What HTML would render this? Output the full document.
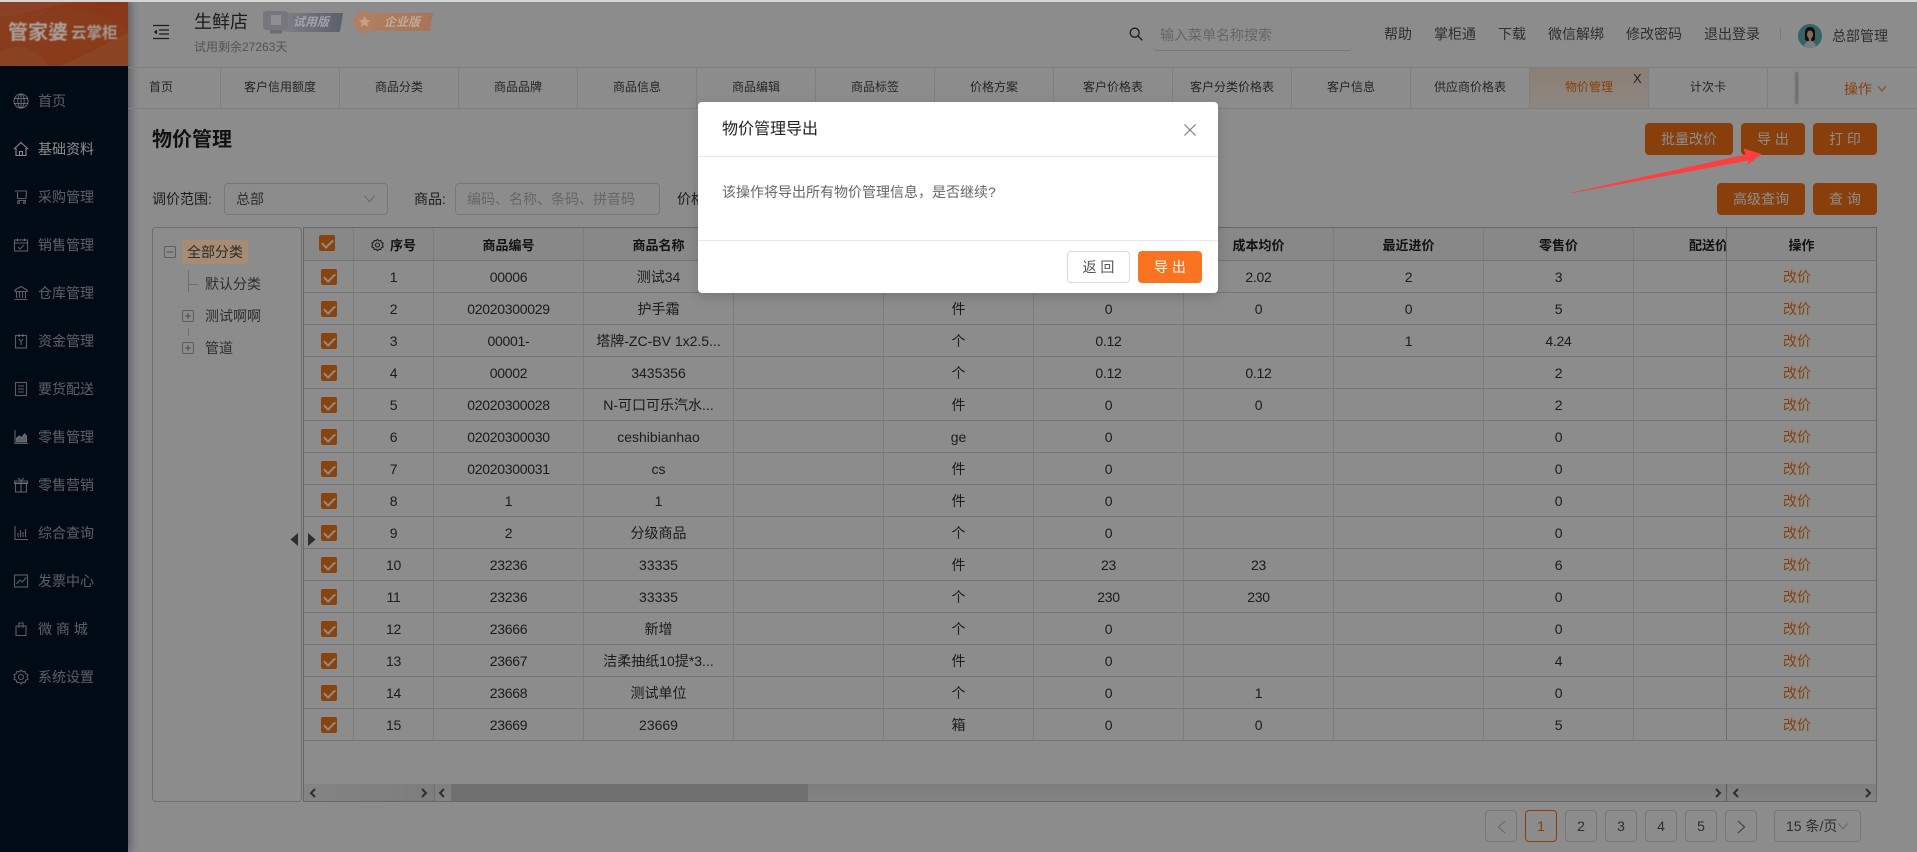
<!DOCTYPE html>
<html lang="zh"><head><meta charset="utf-8"><title>物价管理</title>
<style>
*{box-sizing:border-box}
html,body{margin:0;padding:0;width:1917px;height:852px;overflow:hidden;background:#fff;font-family:"Liberation Sans","Noto Sans CJK SC",sans-serif;color:#333;font-size:14px}
.t{position:absolute;white-space:nowrap;line-height:20px}
.side{position:absolute;left:0;top:0;width:128px;height:852px;background:#001529;box-shadow:3px 0 8px rgba(0,21,41,.35)}
.mi{position:absolute;left:38px;color:rgba(255,255,255,.65);line-height:20px;white-space:nowrap}
.side svg{position:absolute;left:13px;width:16px;height:16px;fill:none;stroke:rgba(255,255,255,.65);stroke-width:1.1}
.tabs{position:absolute;left:128px;top:67px;width:1789px;height:42px;border-top:1px solid #e8e8e8;border-bottom:1px solid #e8e8e8;display:flex;overflow:hidden;font-size:12px;color:#444}
.tabs div{flex:none;width:119px;border-left:1px solid #e8e8e8;text-align:center;line-height:38px;height:40px}
.tabs div.f{width:92px;border-left:0;text-align:left;padding-left:21px}
.tabs div.a{background:linear-gradient(#ffe6d2,#fff6ee);color:#f97316}
.btn{position:absolute;background:#f97316;color:#fff;border-radius:4px;height:32px;line-height:32px;text-align:center}
.box{position:absolute;border:1px solid #d9d9d9;border-radius:4px}
.tb{position:absolute;left:303px;top:227px;width:1574px;height:575px;border:1px solid #b9bcc2;overflow:hidden}
table{border-collapse:separate;border-spacing:0;table-layout:fixed;position:absolute;left:0;top:0}
td,th{height:32px;padding:0;border-right:1px solid #e2e4e8;border-bottom:1px solid #d6d9e0;text-align:center;white-space:nowrap;overflow:hidden;font-weight:400;letter-spacing:-.28px;color:#333}
th{height:33px;font-weight:700;font-size:13px;background:#f7f7f7;color:#222;letter-spacing:0;border-bottom:1px solid #cfd2d8}
td:nth-child(4),td:nth-child(6){letter-spacing:0}
.cb{display:inline-block;width:16px;height:16px;background:#f97a1c;border-radius:2px;position:relative;vertical-align:middle}
.cb:after{content:"";position:absolute;left:5px;top:2px;width:5px;height:9px;border:solid #fff;border-width:0 2px 2px 0;transform:rotate(45deg)}
.fx{position:absolute;left:1422px;top:0;width:150px;background:#fff}
.fx td,.fx th{border-left:1px solid #c4c7cd;border-right:0}
.fx td{color:#f97316;padding-right:9px;letter-spacing:0}
.sb{position:absolute;top:556px;height:18px;background:linear-gradient(#e6e6e6,#f0f0f0)}
.chev{position:absolute;fill:none;stroke:#555;stroke-width:2}
.pg{position:absolute;top:810px;width:32px;height:32px;border:1px solid #d9d9d9;border-radius:4px;text-align:center;line-height:30px;color:#555}
.ov{position:absolute;left:0;top:0;width:1917px;height:852px;background:rgba(0,0,0,.45)}
.modal{position:absolute;left:698px;top:102px;width:520px;height:191px;background:#fff;border-radius:4px;box-shadow:0 4px 12px rgba(0,0,0,.15)}
</style></head><body>

<div class="side">
<svg viewBox="0 0 100 70" preserveAspectRatio="none" style="left:0;top:2px;width:128px;height:64px;stroke:none"><defs><linearGradient id="lg" x1="0" y1="0" x2="1" y2="1"><stop offset="0" stop-color="#f8703a"/><stop offset="1" stop-color="#fb6a2c"/></linearGradient></defs><rect width="100" height="70" fill="url(#lg)"/><path d="M0 0H100V30C80 8 50 4 30 10 18 14 8 14 0 12Z" fill="#ff5f2b" opacity=".55"/><path d="M0 0H60C40 4 20 14 0 16Z" fill="#ff8a55" opacity=".5"/><path d="M45 70C65 62 85 42 100 34V70Z" fill="#ff8f50" opacity=".55"/><path d="M0 55C12 45 26 46 38 70H0Z" fill="#ff8a4c" opacity=".45"/></svg>

<svg style="top:93px" viewBox="0 0 16 16"><circle cx="8" cy="8" r="7"/><ellipse cx="8" cy="8" rx="3.2" ry="7"/><path d="M1 5.5h14M1 10.5h14M8 1v14"/></svg>
<div class="mi" style="top:91px">首页</div>
<svg style="top:141px;stroke:#fff" viewBox="0 0 16 16"><path d="M1 8 8 1.5 15 8M3 7v7.5h10V7M6.5 14.5V10.5h3v4"/></svg>
<div class="mi" style="top:139px;color:#fff">基础资料</div>
<svg style="top:189px" viewBox="0 0 16 16"><path d="M2 2h11.5L13 9.5H4.5V3M4.5 11.5H13"/><circle cx="5.5" cy="13.5" r="1"/><circle cx="11.5" cy="13.5" r="1"/></svg>
<div class="mi" style="top:187px">采购管理</div>
<svg style="top:237px" viewBox="0 0 16 16"><rect x="1.5" y="3" width="13" height="11"/><path d="M1.5 6h13M4.5 1.5V4M11.5 1.5V4M5 10l2 2 4-4"/></svg>
<div class="mi" style="top:235px">销售管理</div>
<svg style="top:285px" viewBox="0 0 16 16"><path d="M8 1.5 2 5v1.5h12V5ZM3.5 7v6M6.5 7v6M9.5 7v6M12.5 7v6M1.5 14.5h13"/></svg>
<div class="mi" style="top:283px">仓库管理</div>
<svg style="top:333px" viewBox="0 0 16 16"><rect x="2.5" y="2.5" width="11" height="12.5"/><path d="M6 1v3M10 1v3M6 6l2 2.5L10 6M8 8.5V12"/></svg>
<div class="mi" style="top:331px">资金管理</div>
<svg style="top:381px" viewBox="0 0 16 16"><rect x="2.5" y="1.5" width="11" height="13"/><path d="M5 5h6M5 8h6M5 11h6"/></svg>
<div class="mi" style="top:379px">要货配送</div>
<svg style="top:429px" viewBox="0 0 16 16"><path d="M2 1v13.5h13"/><path d="M3.5 13V9l3-2 2 2 3-4 2 2v6Z" fill="rgba(255,255,255,.65)"/></svg>
<div class="mi" style="top:427px">零售管理</div>
<svg style="top:477px" viewBox="0 0 16 16"><rect x="2.5" y="6" width="11" height="9"/><path d="M1.5 4h13v2.5h-13ZM8 4v11M5 1l3 3 3-3"/></svg>
<div class="mi" style="top:475px">零售营销</div>
<svg style="top:525px" viewBox="0 0 16 16"><path d="M2 1v13.5h13M5 12V8M7.5 12V5M10 12V7M12.5 12V4"/></svg>
<div class="mi" style="top:523px">综合查询</div>
<svg style="top:573px" viewBox="0 0 16 16"><rect x="1.5" y="2" width="13" height="12"/><path d="M3.5 11 7 7l2.5 2 3.5-4.5"/></svg>
<div class="mi" style="top:571px">发票中心</div>
<svg style="top:621px" viewBox="0 0 16 16"><path d="M3 5h10v9.5H3ZM6 7V2h4v5"/></svg>
<div class="mi" style="top:619px">微 商 城</div>
<svg style="top:669px" viewBox="0 0 16 16"><path d="M8 1l1.6 1.8 2.4-.4.7 2.3 2.3 1L14 8l1 2.3-2.3 1-.7 2.3-2.4-.4L8 15l-1.600-1.800-2.400.4-.7-2.300-2.300-1L2 8 1 5.700l2.300-1 .7-2.300 2.400.4Z"/><circle cx="8" cy="8" r="2.5"/></svg>
<div class="mi" style="top:667px">系统设置</div>
</div>

<!-- header -->
<svg style="position:absolute;left:153px;top:24px" width="16" height="16" viewBox="0 0 16 16" fill="none" stroke="#333" stroke-width="1.2"><path d="M0 1.5h16M6 6h10M6 10h10M0 14.5h16"/><path d="M4 5.500v5L.8 8Z" fill="#333" stroke="none"/></svg>
<div class="t" style="left:194px;top:12px;font-size:18px;color:#333">生鲜店</div>
<div class="t" style="left:194px;top:37px;font-size:12px;color:#999">试用剩余27263天</div>

<svg style="position:absolute;left:1129px;top:27px" width="14" height="14" viewBox="0 0 14 14" fill="none" stroke="#333" stroke-width="1.300"><circle cx="5.700" cy="5.700" r="4.500"/><path d="M9 9l4.300 4.300"/></svg>
<div class="t" style="left:1160px;top:25px;color:#bbb">输入菜单名称搜索</div>
<div style="position:absolute;left:1153px;top:45px;width:199px;height:6px;border-bottom:1px solid #d9d9d9;border-radius:0 0 4px 4px"></div>
<div class="t" style="left:1384px;top:24px;color:#555">帮助</div>
<div class="t" style="left:1434px;top:24px;color:#555">掌柜通</div>
<div class="t" style="left:1498px;top:24px;color:#555">下载</div>
<div class="t" style="left:1548px;top:24px;color:#555">微信解绑</div>
<div class="t" style="left:1626px;top:24px;color:#555">修改密码</div>
<div class="t" style="left:1704px;top:24px;color:#555">退出登录</div>
<div style="position:absolute;left:1780px;top:28px;width:1px;height:12px;background:#ddd"></div>
<svg style="position:absolute;left:1798px;top:24px" width="24" height="24" viewBox="0 0 24 24"><defs><clipPath id="av"><circle cx="12" cy="12" r="12"/></clipPath></defs><g clip-path="url(#av)"><rect width="24" height="24" fill="#62b4bb"/><path d="M6 24c0-5 3-7 6-7s6 2 6 7Z" fill="#cfe6ea"/><path d="M7 16V8c0-3 2-5 5-5s5 2 5 5v8l-2 1H9Z" fill="#241a18"/><ellipse cx="12" cy="10.500" rx="3" ry="4" fill="#f0c7a8"/><rect x="10.800" y="13.500" width="2.400" height="4" fill="#f0c7a8"/></g></svg>
<div class="t" style="left:1832px;top:26px;color:#555">总部管理</div>

<!-- tabs -->
<div class="tabs">
<div class="f">首页</div><div>客户信用额度</div><div>商品分类</div><div>商品品牌</div><div>商品信息</div><div>商品编辑</div><div>商品标签</div><div>价格方案</div><div>客户价格表</div><div>客户分类价格表</div><div>客户信息</div><div>供应商价格表</div><div class="a">物价管理</div><div>计次卡</div><div></div>
</div>
<div class="t" style="left:1633px;top:69px;font-size:13px;color:#444">X</div>
<div style="position:absolute;left:1798px;top:68px;width:119px;height:40px;background:#fff"></div>
<div style="position:absolute;left:1794px;top:72px;width:4px;height:32px;background:linear-gradient(90deg,rgba(0,0,0,0),rgba(0,0,0,.35));filter:blur(.8px)"></div>
<div class="t" style="left:1844px;top:79px;color:#f97316">操作</div>
<svg style="position:absolute;left:1877px;top:85px" width="10" height="7" viewBox="0 0 10 7" fill="none" stroke="#f97316" stroke-width="1"><path d="M1 1l4 5 4-5"/></svg>

<div class="t" style="left:152px;top:128px;font-size:20px;font-weight:700;color:#222;line-height:24px">物价管理</div>
<div class="btn" style="left:1645px;top:123px;width:88px">批量改价</div>
<div class="btn" style="left:1741px;top:123px;width:64px">导 出</div>
<div class="btn" style="left:1813px;top:123px;width:64px">打 印</div>
<div class="btn" style="left:1717px;top:183px;width:88px">高级查询</div>
<div class="btn" style="left:1813px;top:183px;width:64px">查 询</div>

<div class="t" style="left:152px;top:189px">调价范围:</div>
<div class="box" style="left:224px;top:183px;width:164px;height:32px"></div>
<div class="t" style="left:236px;top:189px;color:#555">总部</div>
<svg style="position:absolute;left:364px;top:195px" width="11" height="8" viewBox="0 0 11 8" fill="none" stroke="#bbb" stroke-width="1"><path d="M.5.500 5.500 7l5-6.500"/></svg>
<div class="t" style="left:414px;top:189px">商品:</div>
<div class="box" style="left:455px;top:183px;width:205px;height:32px"></div>
<div class="t" style="left:467px;top:189px;color:#bbb">编码、名称、条码、拼音码</div>
<div class="t" style="left:677px;top:189px">价格方案:</div>

<!-- tree -->
<div class="box" style="left:152px;top:227px;width:150px;height:575px;border-color:#c8cbd0"></div>
<svg style="position:absolute;left:163px;top:245px" width="14" height="14" viewBox="0 0 14 14" fill="#fff" stroke="#a9a9a9"><rect x="1.500" y="1.500" width="11" height="11" rx="1"/><path d="M4 7h6" stroke="#888"/></svg>
<div style="position:absolute;left:188px;top:270px;width:1px;height:22px;background:#ccc"></div>
<div style="position:absolute;left:188px;top:284px;width:10px;height:1px;background:#ccc"></div>
<div class="t" style="left:205px;top:274px;color:#555">默认分类</div>
<svg style="position:absolute;left:181px;top:309px" width="14" height="14" viewBox="0 0 14 14" fill="#fff" stroke="#a9a9a9"><rect x="1.500" y="1.500" width="11" height="11" rx="1"/><path d="M4 7h6M7 4v6" stroke="#888"/></svg>
<div class="t" style="left:205px;top:306px;color:#555">测试啊啊</div>
<div style="position:absolute;left:188px;top:328px;width:1px;height:8px;background:#ccc"></div>
<svg style="position:absolute;left:181px;top:341px" width="14" height="14" viewBox="0 0 14 14" fill="#fff" stroke="#a9a9a9"><rect x="1.500" y="1.500" width="11" height="11" rx="1"/><path d="M4 7h6M7 4v6" stroke="#888"/></svg>
<div class="t" style="left:205px;top:338px;color:#555">管道</div>

<!-- table -->
<div class="tb">
<table style="width:1480px">
<colgroup><col style="width:50px"><col style="width:80px"><col style="width:150px"><col style="width:150px"><col style="width:150px"><col style="width:150px"><col style="width:150px"><col style="width:150px"><col style="width:150px"><col style="width:150px"><col style="width:150px"></colgroup>
<tr><th><span class="cb" style="left:-2px;top:-1px"></span></th><th><svg width="13" height="14" viewBox="0 0 16 16" fill="none" stroke="#333" stroke-width="1.300" style="vertical-align:-2px;margin-right:6px"><path d="M8 1l1.600 1.800 2.400-.4.700 2.300 2.300 1L14 8l1 2.300-2.300 1-.7 2.300-2.400-.4L8 15l-1.600-1.800-2.400.4-.7-2.300-2.300-1L2 8 1 5.700l2.300-1 .7-2.300 2.400.4Z"/><circle cx="8" cy="8" r="2.500"/></svg>序号</th><th>商品编号</th><th>商品名称</th><th>规格</th><th>单位</th><th>成本价</th><th>成本均价</th><th>最近进价</th><th>零售价</th><th>配送价</th></tr>
<tr><td><span class="cb"></span></td><td>1</td><td>00006</td><td>测试34</td><td></td><td>件</td><td>2</td><td>2.02</td><td>2</td><td>3</td><td></td></tr>
<tr><td><span class="cb"></span></td><td>2</td><td>02020300029</td><td>护手霜</td><td></td><td>件</td><td>0</td><td>0</td><td>0</td><td>5</td><td></td></tr>
<tr><td><span class="cb"></span></td><td>3</td><td>00001-</td><td>塔牌-ZC-BV 1x2.5...</td><td></td><td>个</td><td>0.12</td><td></td><td>1</td><td>4.24</td><td></td></tr>
<tr><td><span class="cb"></span></td><td>4</td><td>00002</td><td>3435356</td><td></td><td>个</td><td>0.12</td><td>0.12</td><td></td><td>2</td><td></td></tr>
<tr><td><span class="cb"></span></td><td>5</td><td>02020300028</td><td>N-可口可乐汽水...</td><td></td><td>件</td><td>0</td><td>0</td><td></td><td>2</td><td></td></tr>
<tr><td><span class="cb"></span></td><td>6</td><td>02020300030</td><td>ceshibianhao</td><td></td><td>ge</td><td>0</td><td></td><td></td><td>0</td><td></td></tr>
<tr><td><span class="cb"></span></td><td>7</td><td>02020300031</td><td>cs</td><td></td><td>件</td><td>0</td><td></td><td></td><td>0</td><td></td></tr>
<tr><td><span class="cb"></span></td><td>8</td><td>1</td><td>1</td><td></td><td>件</td><td>0</td><td></td><td></td><td>0</td><td></td></tr>
<tr><td><span class="cb"></span></td><td>9</td><td>2</td><td>分级商品</td><td></td><td>个</td><td>0</td><td></td><td></td><td>0</td><td></td></tr>
<tr><td><span class="cb"></span></td><td>10</td><td>23236</td><td>33335</td><td></td><td>件</td><td>23</td><td>23</td><td></td><td>6</td><td></td></tr>
<tr><td><span class="cb"></span></td><td>11</td><td>23236</td><td>33335</td><td></td><td>个</td><td>230</td><td>230</td><td></td><td>0</td><td></td></tr>
<tr><td><span class="cb"></span></td><td>12</td><td>23666</td><td>新增</td><td></td><td>个</td><td>0</td><td></td><td></td><td>0</td><td></td></tr>
<tr><td><span class="cb"></span></td><td>13</td><td>23667</td><td>洁柔抽纸10提*3...</td><td></td><td>件</td><td>0</td><td></td><td></td><td>4</td><td></td></tr>
<tr><td><span class="cb"></span></td><td>14</td><td>23668</td><td>测试单位</td><td></td><td>个</td><td>0</td><td>1</td><td></td><td>0</td><td></td></tr>
<tr><td><span class="cb"></span></td><td>15</td><td>23669</td><td>23669</td><td></td><td>箱</td><td>0</td><td>0</td><td></td><td>5</td><td></td></tr>
</table>
<table class="fx" style="width:150px">
<tr><th>操作</th></tr>
<tr><td>改价</td></tr><tr><td>改价</td></tr><tr><td>改价</td></tr><tr><td>改价</td></tr><tr><td>改价</td></tr><tr><td>改价</td></tr><tr><td>改价</td></tr><tr><td>改价</td></tr><tr><td>改价</td></tr><tr><td>改价</td></tr><tr><td>改价</td></tr><tr><td>改价</td></tr><tr><td>改价</td></tr><tr><td>改价</td></tr><tr><td>改价</td></tr>
</table>
<div class="sb" style="left:0;width:130px;background:linear-gradient(90deg,#f0f0f0,#e4e4e4)"></div>
<div class="sb" style="left:130px;width:1292px;border-left:1px solid #ccc"></div>
<div class="sb" style="left:147px;width:357px;background:#cdcdcd"></div>
<div class="sb" style="left:1422px;width:150px;border-left:1px solid #aaa"></div>
<svg class="chev" style="left:5px;top:560px" width="7" height="10" viewBox="0 0 7 10"><path d="M6 1 2 5l4 4"/></svg>
<svg class="chev" style="left:117px;top:560px" width="7" height="10" viewBox="0 0 7 10"><path d="M1 1l4 4-4 4"/></svg>
<svg class="chev" style="left:134px;top:560px" width="7" height="10" viewBox="0 0 7 10"><path d="M6 1 2 5l4 4"/></svg>
<svg class="chev" style="left:1411px;top:560px" width="7" height="10" viewBox="0 0 7 10"><path d="M1 1l4 4-4 4"/></svg>
<svg class="chev" style="left:1428px;top:560px" width="7" height="10" viewBox="0 0 7 10"><path d="M6 1 2 5l4 4"/></svg>
<svg class="chev" style="left:1561px;top:560px" width="7" height="10" viewBox="0 0 7 10"><path d="M1 1l4 4-4 4"/></svg>
</div>

<svg style="position:absolute;left:290px;top:533px" width="26" height="13" viewBox="0 0 26 13" fill="#555"><path d="M8 0v13L.5 6.500Z"/><path d="M18 0v13l7.500-6.500Z"/></svg>

<!-- pagination -->
<div class="pg" style="left:1485px;color:#bbb"><svg width="9" height="14" viewBox="0 0 9 14" fill="none" stroke="#bbb" style="vertical-align:-3px"><path d="M8 1 1.500 7 8 13"/></svg></div>
<div class="pg" style="left:1525px;border-color:#f97316;color:#f97316">1</div>
<div class="pg" style="left:1565px">2</div>
<div class="pg" style="left:1605px">3</div>
<div class="pg" style="left:1645px">4</div>
<div class="pg" style="left:1685px">5</div>
<div class="pg" style="left:1725px"><svg width="9" height="14" viewBox="0 0 9 14" fill="none" stroke="#666" style="vertical-align:-3px"><path d="M1 1l6.500 6L1 13"/></svg></div>
<div class="box" style="left:1774px;top:810px;width:87px;height:32px"></div>
<div class="t" style="left:1786px;top:816px;color:#555">15 条/页</div>
<svg style="position:absolute;left:1838px;top:823px" width="10" height="7" viewBox="0 0 10 7" fill="none" stroke="#bbb"><path d="M.5.500 5 6l4.500-5.500"/></svg>

<div class="ov"></div>
<div style="position:absolute;left:0;top:0;width:1917px;height:2px;background:#d6d6d6"></div>

<!-- logo text, badges and tree highlight sit lighter than the dimmed layer -->
<div class="t" style="left:8px;top:20px;font-size:20px;font-weight:700;color:#a9a29c;line-height:26px;filter:blur(.4px)">管家婆</div>
<div class="t" style="left:71px;top:23px;font-size:15.5px;font-weight:700;color:#a39a94;line-height:22px;filter:blur(.4px)">云掌柜</div>

<svg style="position:absolute;left:263px;top:11px" width="80" height="23" viewBox="0 0 80 23"><defs><linearGradient id="b1" x1="0" x2="1"><stop offset="0" stop-color="#85858d"/><stop offset=".55" stop-color="#6c6e78"/><stop offset="1" stop-color="#5c606c"/></linearGradient><linearGradient id="b2" x1="0" x2="1"><stop offset="0" stop-color="#b07e60"/><stop offset="1" stop-color="#a87455"/></linearGradient></defs><path d="M12 2H80L77 20Q76.500 21 75 21H12Z" fill="url(#b1)"/><rect x="0" y="0" width="25" height="19" rx="3" fill="#76767f"/><rect x="8" y="4" width="10" height="10" fill="#8e8e94"/><rect x="7" y="19" width="12" height="3.500" fill="#6c6c74"/></svg>
<div class="t" style="left:293px;top:12px;font-size:12px;font-weight:700;font-style:italic;color:#a2a2a8">试用版</div>
<svg style="position:absolute;left:353px;top:11px" width="80" height="23" viewBox="0 0 80 23"><path d="M12 2H80L77 19Q76.500 20 75 20H12Z" fill="url(#b2)"/><circle cx="11.500" cy="11" r="11" fill="#b07e60"/><path d="M11.500 5l1.700 3.800 4.100.4-3.100 2.700.9 4-3.600-2.100-3.600 2.100.9-4-3.100-2.700 4.100-.4Z" fill="#c8a288"/></svg>
<div class="t" style="left:384px;top:12px;font-size:12px;font-weight:700;font-style:italic;color:#beaa9c">企业版</div>

<div style="position:absolute;left:182px;top:240px;width:66px;height:24px;background:#a68c74;border-radius:2px"></div>
<div class="t" style="left:187px;top:242px;color:#2e2a26">全部分类</div>

<!-- modal -->
<div class="modal">
<div class="t" style="left:24px;top:16px;font-size:16px;line-height:24px;color:#222">物价管理导出</div>
<svg style="position:absolute;left:486px;top:22px" width="12" height="12" viewBox="0 0 12 12" fill="none" stroke="#777" stroke-width="1.100"><path d="M.5.500l11 11M11.500.500l-11 11"/></svg>
<div style="position:absolute;left:0;top:54px;width:520px;height:1px;background:#e8e8e8"></div>
<div class="t" style="left:24px;top:80px;color:#666">该操作将导出所有物价管理信息，是否继续?</div>
<div style="position:absolute;left:0;top:138px;width:520px;height:1px;background:#e8e8e8"></div>
<div class="btn" style="left:369px;top:149px;width:63px;background:#fff;border:1px solid #d9d9d9;color:#555;line-height:30px">返 回</div>
<div class="btn" style="left:440px;top:149px;width:64px;background:#f97320">导 出</div>
</div>

<!-- arrow -->
<svg style="position:absolute;left:1570px;top:140px" width="200" height="60" viewBox="0 0 200 60"><path d="M2 52.500 175.500 14.500 173.500 8.500 191.500 14 177 25.500 179 20.500 3 53Z" fill="#ff3f3f"/></svg>

</body></html>
